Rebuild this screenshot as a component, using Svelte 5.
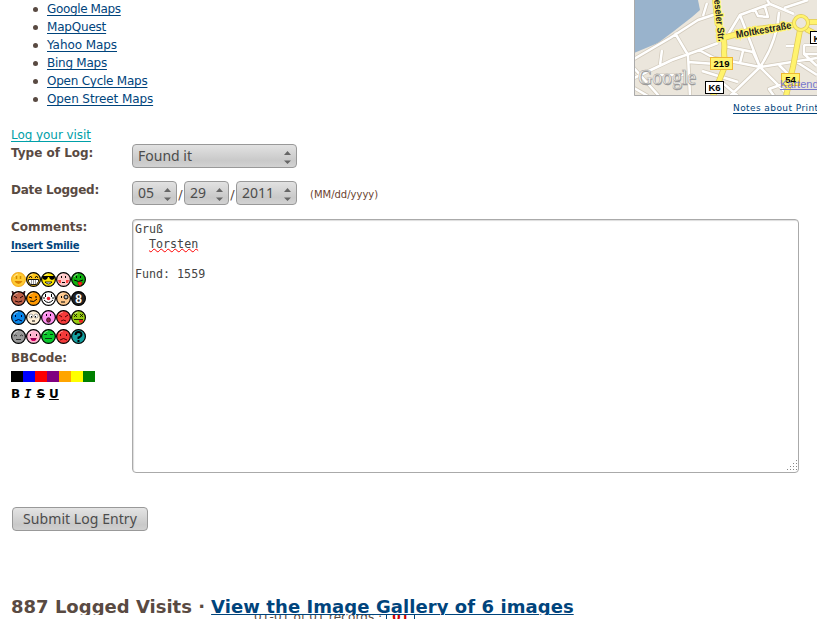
<script>
  const maps = [['Google Maps', -.36], ['MapQuest', -.2], ['Yahoo Maps', -.07], ['Bing Maps', -.25], ['Open Cycle Maps', -.24], ['Open Street Maps', -.1]];
  const swatches = ['#000', '#00f', '#f00', 'purple', 'orange', '#ff0', 'green'];
  const dates = [['05', 45], ['29', 45], ['2011', 61]];
  const smilies = [
    ['#fc3', 'smile'], ['#ffc61a', 'grin'], ['#ffe600', 'cool'], ['#ffc9c9', 'blush'], ['#10b010', 'tongue'],
    ['#bd6048', 'evil'], ['#f90', 'wink'], ['#fff', 'clown'], ['#ffc98c', 'eye'], ['#222', 'eight'],
    ['#0a87e8', 'sad'], ['#fff0d8', 'shy'], ['#ff91ee', 'shock'], ['#f53b3b', 'angry'], ['#9c1', 'dead'],
    ['#999', 'sleep'], ['#ffb5cf', 'kiss'], ['#0ac82c', 'approve'], ['#f53b3b', 'frown'], ['#12a0a0', 'question']
  ];
</script>

{#snippet select(text, width)}
  <span class="select" style:width="{width}px">
    <span>{text}</span>
    <svg width="7" height="13" viewBox="0 0 7 13"><path d="M0 4L3.500 0L7 4ZM0 9.500L3.500 13L7 9.500Z" fill="#666" /></svg>
  </span>
{/snippet}

{#snippet face(color, kind)}
  <svg class="face" viewBox="0 0 15 15">
    {#if kind === 'evil'}<path d="M1 0L2 5L5 3ZM14 0L13 5L10 3Z" fill="#812" stroke="#000" stroke-width=".7" />{/if}
    <circle cx="7.5" cy="7.5" r="6.9" fill={color} stroke={kind === 'smile' ? '#f4ae24' : '#000'} stroke-width="1.2" />
    {#if kind !== 'eight' && kind !== 'question'}
      <path d="M3 5Q4.5 2 7 2" fill="none" stroke="#fff" stroke-opacity=".45" />
    {/if}
    {#if kind === 'smile'}
      <path d="M5.5 4v3M9.5 4v3" stroke="#d58a00" stroke-width="1.5" /><path d="M3.5 9h8Q10 12 7.5 12T3.5 9" fill="#d98200" />
    {:else if kind === 'grin'}
      <path d="M3 6l1.5-2L6 6M9 6l1.5-2L12 6" fill="none" stroke="#000" /><path d="M2.500 7.500h10v2l-2 3h-6l-2-3Z" fill="#fff" stroke="#000" stroke-width=".9" /><path d="M5.5 8v4M7.5 8v4M9.5 8v4" stroke="#000" stroke-width=".4" />
    {:else if kind === 'cool'}
      <path d="M1 4h13v1l-1 2-2 1-2-1-1-2H7L6 7 4 8 2 7 1 5Z" /><path d="M4 10h7q-3.500 4-7 0" fill="#fff" stroke="#000" stroke-width=".8" />
    {:else if kind === 'blush'}
      <path d="M5.500 4v2M9.500 4v2M6 10.500h3" fill="none" stroke="#000" /><path d="M2 8h3v3H3ZM10 8h3l-1 3h-2Z" fill="#f44" />
    {:else if kind === 'tongue'}
      <path d="M5.500 4v2M9.500 4v2M3 8q4.500 3 9 0" fill="none" stroke="#000" /><path d="M7 10h4v2l-2 2-2-2Z" fill="#f22" stroke="#800" stroke-width=".5" />
    {:else if kind === 'evil'}
      <path d="M3 5l3 2M12 5L9 7M4 10q3.500 2 7 0" fill="none" stroke="#200" />
    {:else if kind === 'wink'}
      <path d="M3 6l3 1M10 5v2M4 10q4 2 7-2" fill="none" stroke="#000" />
    {:else if kind === 'clown'}
      <path d="M4.500 3v3M10.500 3v3M3 9q4.500 5 9 0M2 7h2M11 7h2" fill="none" stroke="#000" /><circle cx="7.500" cy="7.500" r="1.800" fill="#e23" />
    {:else if kind === 'eye'}
      <path d="M5.500 5v2M5 11h4" stroke="#000" /><circle cx="10" cy="6" r="2" fill="#bbb" stroke="#000" />
    {:else if kind === 'eight'}
      <text x="7.500" y="12" text-anchor="middle" fill="#fff">8</text>
    {:else if kind === 'sad'}
      <path d="M4.500 5v2M10.500 5v2M4 11q3.500-3 7 0" fill="none" stroke="#003" />
    {:else if kind === 'shy'}
      <circle cx="5" cy="6" r="2" fill="#fff" stroke="#555" stroke-width=".5" /><circle cx="10" cy="6" r="2" fill="#fff" stroke="#555" stroke-width=".5" /><path d="M5.500 6v1.500M9.500 6v1.500M6 11h3" stroke="#000" />
    {:else if kind === 'shock'}
      <path d="M5.500 4v2M9.500 4v2" stroke="#000" /><ellipse cx="7.500" cy="10" rx="2" ry="2.300" fill="#824" stroke="#000" stroke-width=".6" />
    {:else if kind === 'angry'}
      <path d="M3 5l3 2M12 5L9 7M5 11q2.500-2 5 0" fill="none" stroke="#500" />
    {:else if kind === 'dead'}
      <path d="M3 4l3 3M6 4L3 7M9 4l3 3M12 4L9 7M3 9.500h9" stroke="#000" stroke-width=".8" /><path d="M8 10h4v2l-2 1-2-1Z" fill="#e22" />
    {:else if kind === 'sleep'}
      <path d="M3 7q1.500-2 3 0M9 7q1.500-2 3 0M5 10.500h5" fill="none" stroke="#333" />
    {:else if kind === 'kiss'}
      <path d="M4.500 5v2M10.500 5v2" stroke="#000" /><path d="M4 9h7l-2 3H6Z" fill="#d06" /><path d="M5 10h5" stroke="#503" />
    {:else if kind === 'approve'}
      <path d="M3 5.500h3M9 5.500h3M4 9.500h7" stroke="#041" />
    {:else if kind === 'frown'}
      <path d="M4.500 5v2M10.500 5v2M4 11q3.500-3 7 0" fill="none" stroke="#500" />
    {:else}
      <path d="M4.500 6q0-3 3-3t3 2.500q0 2-3 3V10M7.500 11v2" fill="none" stroke="#000" stroke-width="2" />
    {/if}
  </svg>
{/snippet}

<main>
  <div class="top">
    <ul>{#each maps as [map, spacing]}<li><a href="#map" style:letter-spacing="{spacing}px">{map}</a></li>{/each}</ul>
    <aside>
      <svg class="map" width="183" height="96" viewBox="0 0 183 96">
        <rect width="183" height="96" fill="#ebe6dc" />
        <path d="M0 0H64L66 10L58 17L40 31L24 43L0 53Z" fill="#99b3cc" />
        {#each [['#d2cabb', 4], ['#fff', 2.5]] as [color, width]}
          <g fill="none" stroke={color} stroke-width={width} stroke-linejoin="round">
            <path d="M0 59L36 38L64 20L82 14M0 78L38 60L63 51L84 43M-2 66L25 96M41 33L54 55L56 96M28 50L26 65M22 75H50M0 88L14 96M65 50L80 58L126 67L183 58M54 62L82 64M68 71L104 82M90 46L119 52L126 67M89 43L106 15L136 4L160 14M106 15L126 67L155 96M109 51L106 63M121 10L124 16L134 17L131 7M145 12Q143 42 126 67L96 96M84 79L104 96M145 65L160 80L135 89L140 96M152 46H162M170 45H183M170 45V54H183M170 54L183 66M69 16L73 3M136 4L133 0M150 8L174 0M158 59L183 75" />
          </g>
        {/each}
        <g fill="none" stroke="#dfc95b" stroke-width="6"><path d="M81 -2L84 24Q92 37 90 52L91 66L79 96M89 38L122 29L160 25M173 22H184M166 30L159 67L152 96M172 29L184 35" /></g>
        <g fill="none" stroke="#fff36d" stroke-width="4.500"><path d="M81 -2L84 24Q92 37 90 52L91 66L79 96M89 38L122 29L160 25M173 22H184M166 30L159 67L152 96M172 29L184 35" /><circle cx="167" cy="23" r="7" fill="#ebe6dc" stroke="#dfc95b" stroke-width="4" /><circle cx="167" cy="23" r="7" stroke-width="2.500" /></g>
        <text class="road" transform="translate(80 0) rotate(84)" textLength="42" lengthAdjust="spacingAndGlyphs">eseler Str.</text>
        <text class="road" transform="translate(102.500 38) rotate(-10)" textLength="56" lengthAdjust="spacingAndGlyphs">Moltkestraße</text>
        <g class="shield"><rect x="76.500" y="57.500" width="22" height="12" fill="#fff36d" stroke="#efb832" /><text x="87.500" y="67.200">219</text>
          <rect x="71.500" y="81.500" width="18" height="12" fill="#fff" stroke="#000" /><text x="80.500" y="91">K6</text>
          <rect x="147.500" y="73.500" width="18" height="12" fill="#fff36d" stroke="#efb832" /><text x="156.500" y="83">54</text>
          <rect x="176.500" y="31.500" width="18" height="12" fill="#fff" stroke="#000" /><text x="183" y="41.500">K</text></g>
        <text class="google shadow" x="4.500" y="85" textLength="58" lengthAdjust="spacingAndGlyphs">Google</text>
        <text class="google" x="4" y="84" textLength="58" lengthAdjust="spacingAndGlyphs">Google</text>
        <text class="data" x="146" y="88">Kartendaten</text><path d="M146 89.500H183" stroke="#7777cc" />
        <path d="M.5 0V95.500H183" fill="none" stroke="#aaa" />
      </svg>
      <a class="notes" href="#print">Notes about Printing Maps</a>
    </aside>
  </div>

  <section class="form">
    <a class="visit" href="#log">Log your visit</a>
    <div class="row type"><b>Type of Log:</b>{@render select('Found it', 165)}</div>
    <div class="row date"><b class="tight">Date Logged:</b>
      <div class="dates">{#each dates as [text, width], i}{#if i}<span class="slash">/</span>{/if}{@render select(text, width)}{/each}<small>(MM/dd/yyyy)</small></div>
    </div>
    <div class="row comments">
      <div class="tools">
        <b>Comments:</b>
        <a class="insert" href="#smilies">Insert Smilie</a>
        <div class="smilies">{#each smilies as [color, kind]}{@render face(color, kind)}{/each}</div>
        <b class="bb">BBCode:</b>
        <div class="swatches">{#each swatches as color}<i style:background={color}></i>{/each}</div>
        <div class="styles"><b>B</b><em>I</em><s>S</s><u>U</u></div>
      </div>
      <div class="area"><pre>Gruß
  <span>Torsten</span>

Fund: 1559</pre>
        <svg width="11" height="11" viewBox="0 0 11 11"><path d="M9 0h1v1H9zM6 3h1v1H6zM9 3h1v1H9zM3 6h1v1H3zM6 6h1v1H6zM9 6h1v1H9zM0 9h1v1H0zM3 9h1v1H3zM6 9h1v1H6zM9 9h1v1H9z" fill="#888" /></svg>
      </div>
    </div>
    <button>Submit Log Entry</button>
  </section>

  <h2><span>887 Logged Visits ·</span><a href="#gallery">View the Image Gallery of 6 images</a></h2>
  <div class="records"><p>01-01 of 01 records · <strong>01</strong></p></div>
</main>

<style>
  :global(body) { background: #fff; overflow: hidden; }
  main { box-sizing: border-box; width: 817px; height: 619px; overflow: hidden; color: #594a42; font: 12px/18px Verdana, "DejaVu Sans", sans-serif; }
  a { color: #00447c; text-decoration: underline; text-underline-offset: 2px; text-decoration-thickness: 1px; }
  .top { display: flex; justify-content: space-between; height: 126px; }
  ul { margin: 0; padding: 0 0 0 33px; list-style: none; }
  li { display: flex; align-items: center; gap: 9px; height: 18px; }
  li::before { content: ""; width: 5px; height: 5px; border-radius: 50%; background: #594a42; }
  aside { width: 183px; overflow: hidden; }
  .map { display: block; }
  .notes { display: block; margin: 3px 0 0 99px; font-size: 9px; white-space: nowrap; letter-spacing: .42px; }
  .road { font: bold 10px "Liberation Sans", sans-serif; stroke: #fff36d; stroke-width: 3px; paint-order: stroke; fill: #222; }
  .shield text { font: bold 9.500px "Liberation Sans", sans-serif; text-anchor: middle; fill: #000; }
  .google { font: 20px "Liberation Serif", serif; fill: #f4f2ee; stroke: #999; stroke-width: .4px; }
  .shadow { fill: #999; stroke: #999; }
  .data { font: 11px "Liberation Sans", sans-serif; fill: #77c; }
  .form { padding-left: 11px; }
  .visit { display: block; width: max-content; color: #00a0a8; letter-spacing: -.06px; }
  .row { display: flex; }
  .row > b, .tools > b { width: 121px; flex: none; letter-spacing: 0; }
  .row > .tight { letter-spacing: -.22px; }
  .tools > .bb { margin-top: 5px; letter-spacing: -.15px; }
  .type { height: 37px; }
  .date { height: 37px; }
  .select { box-sizing: border-box; display: flex; align-items: center; justify-content: space-between; height: 24px; padding: 0 5px 2px; border: 1px solid #999; border-radius: 4px; background: linear-gradient(#e2e2e2, #c9c9c9 70%, #d2d2d2); color: #4c4c4c; font: 14px "Noto Sans", sans-serif; }
  .select svg { position: relative; top: 2px; }
  .dates { display: flex; height: 24px; }
  .slash { width: 7px; padding-top: 5px; text-align: center; font-size: 13px; }
  small { margin: 5px 0 0 13px; font-size: 10px; color: #6b4230; }
  .comments { height: 289px; }
  .tools { width: 121px; }
  .tools > b { display: block; }
  .insert { display: block; width: max-content; margin-top: 1px; font-size: 10px; font-weight: bold; letter-spacing: -.25px; }
  .smilies { display: flex; flex-wrap: wrap; width: 76px; row-gap: 4px; margin-top: 17px; }
  .face { width: 15px; height: 15px; }
  .face text { font: bold 12px "Liberation Sans", sans-serif; }
  .swatches { display: flex; margin-top: 4px; }
  .swatches i { width: 12px; height: 11px; }
  .styles { display: flex; gap: 4px; margin-top: 3px; color: #000; font-size: 12px; font-weight: bold; }
  .styles em { margin-right: 1px; font-family: "DejaVu Sans Mono", monospace; }
  .area { box-sizing: border-box; display: flex; align-items: flex-end; justify-content: space-between; width: 667px; height: 254px; margin-top: 1px; border: 1px solid #aaa; border-radius: 4px; box-shadow: inset 1px 1px 1px #ddd; }
  .area svg { margin-bottom: 1px; }
  pre { align-self: flex-start; margin: 2px; color: #444; font: 11.667px/15px "DejaVu Sans Mono", monospace; }
  pre span { text-decoration: underline wavy red 1px; text-underline-offset: 0; }
  button { display: block; width: 136px; height: 24px; margin: 0 0 0 1px; padding: 0 0 2px; border: 1px solid #999; border-radius: 4px; background: linear-gradient(#e4e4e4, #c9c9c9 75%, #d0d0d0); color: #4c4c4c; font: 14px "Noto Sans", sans-serif; letter-spacing: .06px; }
  h2 { display: flex; gap: 6px; height: 18px; margin: 66px 0 0; padding-left: 11px; overflow: hidden; font-size: 18px; line-height: 20px; white-space: pre; letter-spacing: .01px; }
  h2 a { text-decoration-thickness: 1px; text-underline-offset: 1px; letter-spacing: .07px; }
  .records { height: 5px; overflow: hidden; }
  p { margin: -7px 0 0 254px; font-size: 12px; letter-spacing: .14px; }
  strong { color: #c00; border: 1px solid #00447c; padding: 1px 5px; }
</style>
